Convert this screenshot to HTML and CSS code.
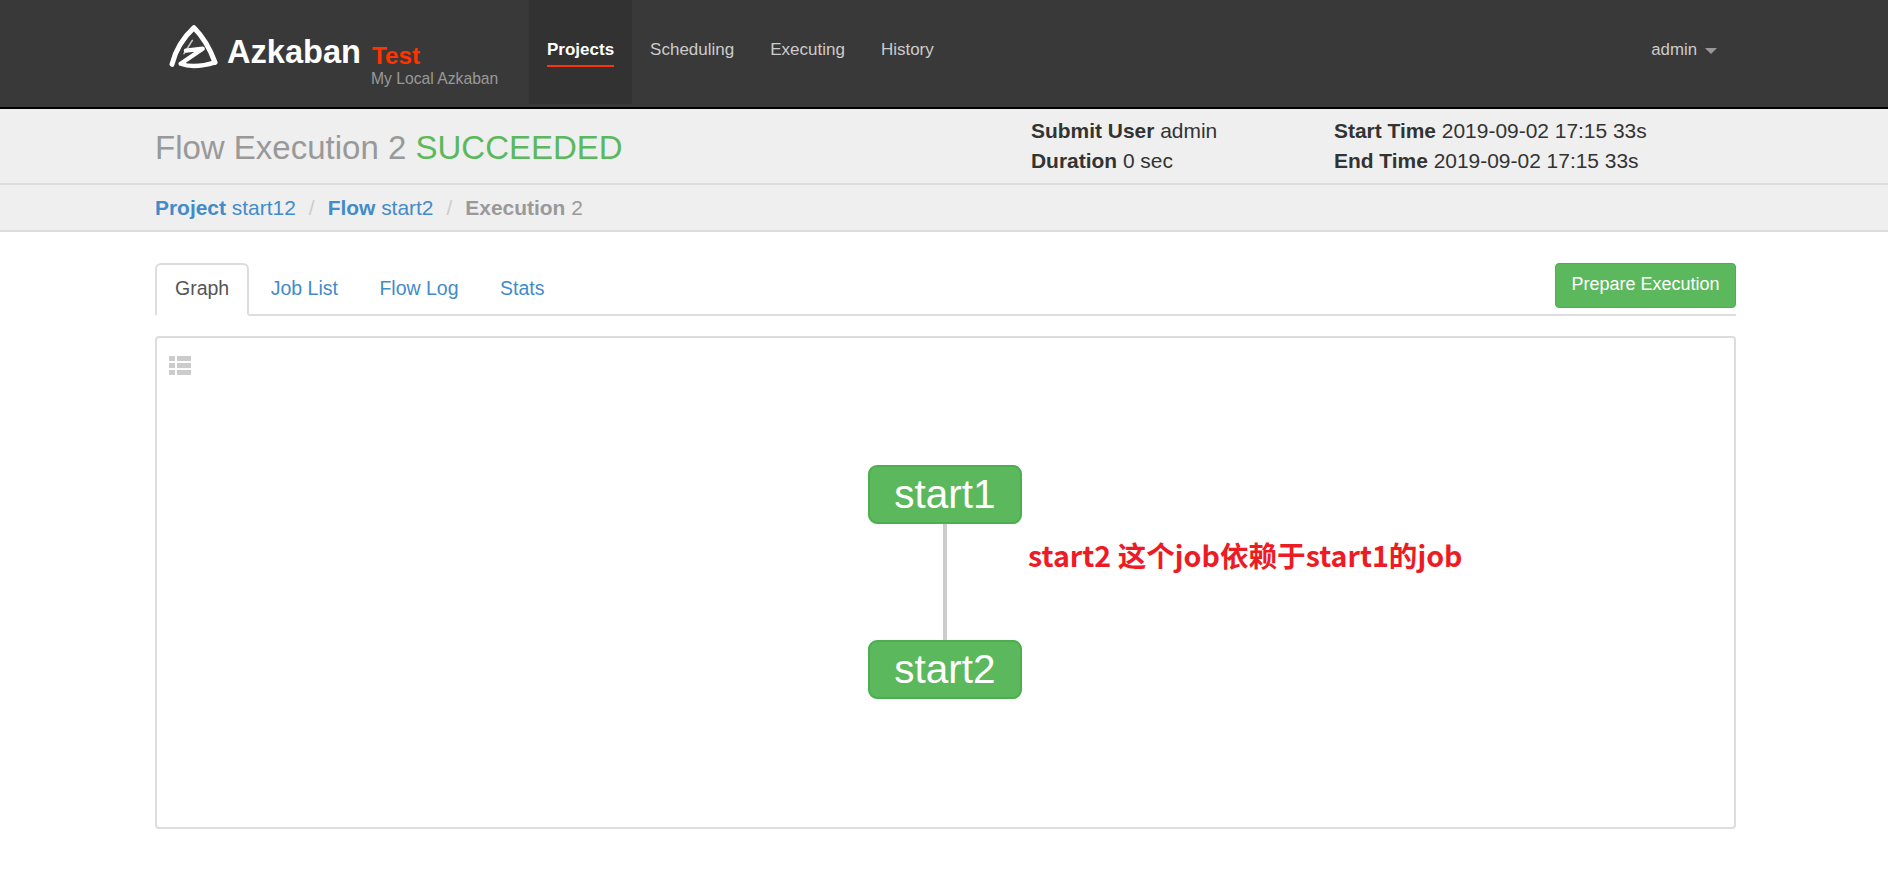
FILE: index.html
```html
<!DOCTYPE html>
<html lang="en">
<head>
<meta charset="utf-8">
<title>Flow Execution 2</title>
<link rel="stylesheet" href="styles.css">
</head>
<body>
<nav class="topbar">
  <div class="brand">
    <svg class="logo" viewBox="0 0 210 195" aria-hidden="true">
      <path class="logo-outer" d="M36 148C48 100 78 60 102 38C122 58 148 95 165 142"/>
      <path class="logo-inner" d="M97 76L72 116"/>
      <path class="logo-z" d="M78 107L128 101L62 146C90 157 130 153 165 142"/>
    </svg>
    <span class="brand-name">Azkaban</span>
    <div class="brand-env">
      <span class="env-name">Test</span>
      <span class="env-desc">My Local Azkaban</span>
    </div>
  </div>
  <ul class="menu">
    <li class="menu-item active"><a>Projects</a></li>
    <li class="menu-item"><a>Scheduling</a></li>
    <li class="menu-item"><a>Executing</a></li>
    <li class="menu-item"><a>History</a></li>
  </ul>
  <div class="user">admin<span class="caret"></span></div>
</nav>
<header class="page-head">
  <h1 class="title">Flow Execution 2 <span class="ok">SUCCEEDED</span></h1>
  <div class="meta">
    <div><b>Submit User</b> admin</div>
    <div><b>Start Time</b> 2019-09-02 17:15 33s</div>
    <div><b>Duration</b> 0 sec</div>
    <div><b>End Time</b> 2019-09-02 17:15 33s</div>
  </div>
</header>
<div class="crumbs">
  <a><b>Project</b> start12</a><span class="sep">/</span><a><b>Flow</b> start2</a><span class="sep">/</span><span class="current"><b>Execution</b> 2</span>
</div>
<main class="content">
  <div class="tabs">
    <a class="tab active">Graph</a>
    <a class="tab">Job List</a>
    <a class="tab">Flow Log</a>
    <a class="tab">Stats</a>
    <button class="prepare">Prepare Execution</button>
  </div>
  <section class="graph">
    <svg class="list-icon" viewBox="0 0 22 19" aria-hidden="true">
      <path d="M0 0h6v5H0zM8 0h14v5H8zM0 7h6v5H0zM8 7h14v5H8zM0 14h6v5H0zM8 14h14v5H8z"/>
    </svg>
    <div class="edge"></div>
    <div class="node node-a">start1</div>
    <div class="node node-b">start2</div>
    <div class="note">start2 这个job依赖于start1的job</div>
  </section>
</main>
</body>
</html>
```
FILE: styles.css
```css
* { box-sizing: border-box; }
html, body { margin: 0; padding: 0; }
body {
  background: #fff;
  font-family: "Liberation Sans", Arial, sans-serif;
  color: #333;
  height: 882px;
  overflow: hidden;
}
a { text-decoration: none; }

.topbar {
  display: flex;
  height: 109px;
  padding: 0 152px 0 168px;
  background: #393939;
  border-bottom: 2px solid #000;
}
.brand {
  display: flex;
  width: 361px;
}
.logo {
  width: 70px;
  height: 65px;
  margin: 15px 0 0 -8px;
  flex: none;
  filter: blur(0.5px);
}
.logo-outer, .logo-inner, .logo-z {
  fill: none;
  stroke: #fff;
  stroke-linejoin: round;
  stroke-linecap: round;
}
.logo-outer { stroke-width: 15; }
.logo-inner { stroke-width: 5; opacity: 0.7; }
.logo-z { stroke-width: 13; }
.brand-name {
  font-size: 32.6px;
  font-weight: bold;
  color: #fff;
  line-height: 36px;
  margin: 34px 0 0 -3px;
}
.brand-env {
  display: flex;
  flex-direction: column;
  margin: 42px 0 0 10px;
}
.env-name {
  margin-left: 1px;
  font-size: 24.3px;
  font-weight: bold;
  color: #ff3300;
  line-height: 27px;
}
.env-desc {
  font-size: 15.7px;
  color: #999;
  line-height: 20px;
  white-space: nowrap;
}
.menu {
  display: flex;
  list-style: none;
  margin: 0;
  padding: 0;
  height: 104px;
  flex: 1;
}
.menu-item {
  padding: 40px 18px 0;
  font-size: 17px;
  line-height: 20px;
  color: #ccc;
}
.menu-item a {
  display: block;
  padding-bottom: 5px;
  height: 27px;
}
.menu-item.active { background: #323232; }
.menu-item.active a {
  color: #fff;
  font-weight: bold;
  border-bottom: 2px solid #ff3300;
}
.user {
  margin: 40px 19px 0 0;
  font-size: 16.8px;
  line-height: 20px;
  color: #ccc;
  display: flex;
  align-items: center;
  height: 20px;
}
.caret {
  width: 0;
  height: 0;
  margin: 2px 0 0 8px;
  border-left: 6px solid transparent;
  border-right: 6px solid transparent;
  border-top: 6px solid #999;
}

.page-head {
  display: flex;
  height: 76px;
  padding: 0 152px 0 155px;
  background: #efefef;
  border-bottom: 2px solid #ddd;
}
.title {
  margin: 19px 0 0;
  width: 876px;
  font-size: 33px;
  line-height: 40px;
  font-weight: normal;
  color: #999;
}
.ok { color: #5cb85c; }
.meta {
  display: grid;
  grid-template-columns: 303px auto;
  grid-auto-rows: 30px;
  padding-top: 7px;
  font-size: 20.95px;
  line-height: 30px;
  color: #333;
}
.crumbs {
  height: 47px;
  padding: 9px 152px 0 155px;
  background: #efefef;
  border-bottom: 2px solid #ddd;
  font-size: 20.95px;
  line-height: 28px;
}
.crumbs a { color: #428bca; }
.sep { color: #ccc; margin: 0 13px; }
.current { color: #999; }

.content { padding: 31px 152px 0 155px; }
.tabs {
  display: flex;
  height: 53px;
  border-bottom: 2px solid #ddd;
  align-items: flex-start;
}
.tab {
  height: 53px;
  padding: 10px 17.5px 0 18px;
  margin-right: 2px;
  font-size: 19.5px;
  line-height: 27px;
  color: #428bca;
  border: 2px solid transparent;
  border-radius: 6px 6px 0 0;
}
.tab.active {
  color: #555;
  background: #fff;
  border-color: #ddd;
  border-bottom-color: #fff;
}
.prepare {
  margin-left: auto;
  width: 181px;
  height: 45px;
  padding: 0 0 2px;
  background: #5cb85c;
  border: 1px solid #4cae4c;
  border-radius: 4px;
  color: #fff;
  font: 18px "Liberation Sans", Arial, sans-serif;
}
.graph {
  position: relative;
  height: 493px;
  margin-top: 20px;
  border: 2px solid #ddd;
  border-radius: 4px;
  background: #fff;
}
.list-icon {
  position: absolute;
  left: 12px;
  top: 18px;
  width: 22px;
  height: 19px;
  fill: #ccc;
}
.node {
  position: absolute;
  left: 711px;
  width: 154px;
  height: 59px;
  background: #5cb85c;
  border: 2px solid #4cae4c;
  border-radius: 9px;
  color: #fff;
  font-size: 40.5px;
  line-height: 55px;
  text-align: center;
}
.node-a { top: 127px; }
.node-b { top: 302px; }
.edge {
  position: absolute;
  left: 786px;
  top: 180px;
  width: 4px;
  height: 130px;
  background: #ccc;
}
.note {
  position: absolute;
  left: 871px;
  top: 197px;
  font-family: "Noto Sans CJK SC", "Liberation Sans", sans-serif;
  font-size: 28.6px;
  line-height: 40px;
  font-weight: bold;
  color: #ed1c24;
  white-space: nowrap;
}
```
